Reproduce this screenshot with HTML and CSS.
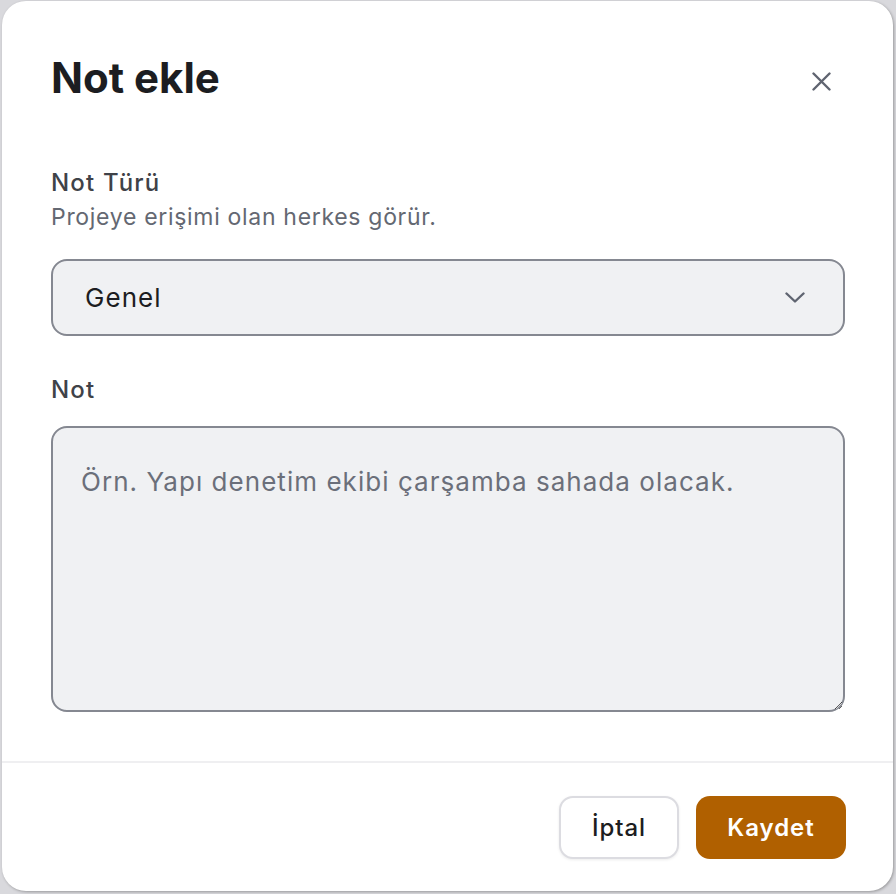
FILE: index.html
```html
<!DOCTYPE html>
<html lang="tr">
<head>
    <meta charset="UTF-8">
    <meta name="viewport" content="width=device-width, initial-scale=1.0">
    <title>Not ekle</title>
    <link rel="stylesheet" href="styles.css">
</head>
<body>
    <div class="dialog">
        <div class="dialog-header">
            <h2>Not ekle</h2>
            <button class="close-btn" aria-label="Kapat">
                <svg width="19" height="19" viewBox="0 0 19 19" fill="none" stroke="currentColor" stroke-width="2.4" stroke-linecap="round">
                    <path d="M1.5 1.5 L17.5 17.5 M17.5 1.5 L1.5 17.5"/>
                </svg>
            </button>
        </div>

        <div class="dialog-body">
            <div class="field">
                <label for="note-type">Not Türü</label>
                <p class="hint">Projeye erişimi olan herkes görür.</p>
                <div class="select-wrap">
                    <select id="note-type">
                        <option>Genel</option>
                        <option>Özel</option>
                    </select>
                    <svg class="chevron" width="20" height="11" viewBox="0 0 20 11" fill="none" stroke="currentColor" stroke-width="2.4" stroke-linecap="round" stroke-linejoin="round">
                        <path d="M1.5 1.5 L10 9.5 L18.5 1.5"/>
                    </svg>
                </div>
            </div>

            <div class="field">
                <label for="note-text" class="label-note">Not</label>
                <textarea id="note-text" placeholder="Örn. Yapı denetim ekibi çarşamba sahada olacak."></textarea>
            </div>
        </div>

        <div class="dialog-footer">
            <button class="btn btn-secondary">İptal</button>
            <button class="btn btn-primary">Kaydet</button>
        </div>
    </div>
</body>
</html>
```

FILE: styles.css
```css
* {
    margin: 0;
    padding: 0;
    box-sizing: border-box;
}

body {
    font-family: Inter, 'Noto Sans', sans-serif;
    letter-spacing: 0.04em;
    background: #d9d9dd;
    width: 896px;
    height: 894px;
    padding: 1px 3px 3px 2px;
    overflow: hidden;
}

.dialog {
    background: white;
    border-radius: 24px;
    box-shadow: 1px 1px 3px rgba(0, 0, 0, 0.3);
    width: 891px;
    height: 890px;
    display: flex;
    flex-direction: column;
}

.dialog-header {
    display: flex;
    align-items: center;
    justify-content: space-between;
    padding: 52px 62px 0 49px;
}

.dialog-header h2 {
    font-size: 42px;
    line-height: 50px;
    font-weight: 700;
    letter-spacing: 0;
    color: #1c1d21;
}

.close-btn {
    background: none;
    border: none;
    color: #5f6470;
    width: 19px;
    height: 19px;
    display: flex;
    cursor: pointer;
    margin-top: 6px;
}

.dialog-body {
    padding: 64px 48px 0 49px;
    flex: 1;
}

.field label {
    display: block;
    font-size: 24px;
    line-height: 32px;
    font-weight: 500;
    letter-spacing: 0.05em;
    color: #3f4248;
}

.hint {
    margin-top: 3px;
    font-size: 23px;
    line-height: 30px;
    letter-spacing: 0.03em;
    color: #646872;
}

.select-wrap {
    position: relative;
    margin-top: 27px;
}

.select-wrap select {
    width: 100%;
    height: 77px;
    appearance: none;
    background: #f0f1f3;
    border: 2px solid #858891;
    border-radius: 16px;
    padding: 0 32px;
    font-family: inherit;
    font-size: 26px;
    letter-spacing: 0.04em;
    color: #1c1d21;
    outline: none;
}

.chevron {
    position: absolute;
    right: 40px;
    top: 33px;
    color: #5f6470;
    pointer-events: none;
}

.label-note {
    margin-top: 38px;
}

textarea {
    display: block;
    width: 100%;
    height: 286px;
    margin-top: 20px;
    background: #f0f1f3;
    border: 2px solid #858891;
    border-radius: 16px;
    padding: 36px 28px;
    font-family: inherit;
    font-size: 26px;
    letter-spacing: 0.04em;
    line-height: 36px;
    color: #1c1d21;
    outline: none;
}

textarea::placeholder {
    color: #6b6f7a;
}

.dialog-footer {
    border-top: 2px solid #efeff1;
    display: flex;
    justify-content: flex-end;
    gap: 17px;
    padding: 33px 47px 32px;
}

.btn {
    height: 63px;
    border-radius: 14px;
    font-family: inherit;
    font-size: 24px;
    font-weight: 600;
    letter-spacing: 0.04em;
    cursor: pointer;
}

.btn-secondary {
    width: 120px;
    background: white;
    border: 2px solid #dcdce1;
    color: #1c1d21;
    font-weight: 500;
    box-shadow: 0 1px 3px rgba(0, 0, 0, 0.08);
}

.btn-primary {
    width: 150px;
    background: #b06000;
    border: none;
    color: white;
}
```
